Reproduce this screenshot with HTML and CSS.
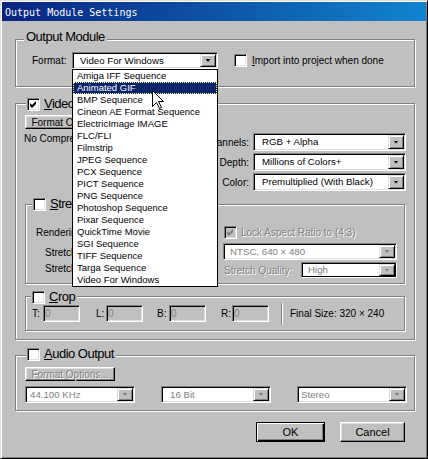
FILE: index.html
```html
<!DOCTYPE html>
<html>
<head>
<meta charset="utf-8">
<title>Output Module Settings</title>
<link rel="stylesheet" href="styles.css">
</head>
<body>
<div class="window">
  <div class="titlebar">Output Module Settings</div>

  <div class="group g-output">
    <div class="legend lg-output"><span class="legend-text">Output Module</span></div>
    <div class="om-row">
      <span class="lbl format-lbl">Format:</span>
      <div class="combo w-format"><span class="val">Video For Windows</span><span class="dd"><i class="arrow"></i></span></div>
      <span class="cb import-cb"></span>
      <span class="lbl import-lbl"><u>I</u>mport into project when done</span>
    </div>
  </div>

  <div class="group g-video">
    <div class="legend lg-video"><span class="cb checked"><svg viewBox="0 0 13 13" width="13" height="13"><polygon points="3,5 5,7 9,3 9,6 5,10 3,8" fill="#000"/></svg></span><span class="legend-text"><u>V</u>ideo Output</span></div>
    <div class="video-top">
      <div class="video-left">
        <button class="btn fmt-btn">Format Options...</button>
        <div class="nocomp">No Compression</div>
      </div>
      <div class="video-right">
        <span class="rlbl">Channels:</span>
        <div class="combo"><span class="val">RGB + Alpha</span><span class="dd"><i class="arrow"></i></span></div>
        <span class="rlbl">Depth:</span>
        <div class="combo"><span class="val">Millions of Colors+</span><span class="dd"><i class="arrow"></i></span></div>
        <span class="rlbl">Color:</span>
        <div class="combo"><span class="val">Premultiplied (With Black)</span><span class="dd"><i class="arrow"></i></span></div>
      </div>
    </div>

    <div class="group inner g-stretch">
      <div class="legend lg-stretch"><span class="cb"></span><span class="legend-text"><u>S</u>tretch</span></div>
      <div class="stretch-body">
        <div class="stretch-left">
          <div class="sl l1">Rendering at:</div>
          <div class="sl l2">Stretch to:</div>
          <div class="sl l3">Stretch %:</div>
        </div>
        <div class="stretch-right">
          <div class="lock-row">
            <span class="cb disabled"><svg viewBox="0 0 13 13" width="13" height="13"><polygon points="3,5 5,7 9,3 9,6 5,10 3,8" fill="#808080"/></svg></span>
            <span class="dis lock-lbl">Lock Aspect Ratio to (4:3)</span>
          </div>
          <div class="combo off ntsc"><span class="val">NTSC, 640 × 480</span><span class="dd"><i class="arrow"></i></span></div>
          <div class="quality-row">
            <span class="dis">Stretch Quality:</span>
            <div class="combo off quality"><span class="val">High</span><span class="dd"><i class="arrow"></i></span></div>
          </div>
        </div>
      </div>
    </div>

    <div class="group inner g-crop">
      <div class="legend lg-crop"><span class="cb"></span><span class="legend-text"><u>C</u>rop</span></div>
      <div class="crop-row">
        <span class="clbl w-t">T:</span><span class="inp">0</span>
        <span class="clbl w-l">L:</span><span class="inp">0</span>
        <span class="clbl w-b">B:</span><span class="inp">0</span>
        <span class="clbl w-r">R:</span><span class="inp">0</span>
        <span class="sep"></span>
        <span class="final">Final Size: 320 × 240</span>
      </div>
    </div>
  </div>

  <div class="group g-audio">
    <div class="legend lg-audio"><span class="cb"></span><span class="legend-text"><u>A</u>udio Output</span></div>
    <button class="btn fmt-btn audio-btn dis">Format Options...</button>
    <div class="audio-row">
      <div class="combo off a1"><span class="val">44.100 KHz</span><span class="dd"><i class="arrow"></i></span></div>
      <div class="combo off a2"><span class="val">16 Bit</span><span class="dd"><i class="arrow"></i></span></div>
      <div class="combo off a3"><span class="val">Stereo</span><span class="dd"><i class="arrow"></i></span></div>
    </div>
  </div>

  <div class="buttons">
    <button class="btn default ok">OK</button>
    <button class="btn cancel">Cancel</button>
  </div>

  <ul class="droplist">
    <li>Amiga IFF Sequence</li>
    <li class="sel">Animated GIF</li>
    <li>BMP Sequence</li>
    <li>Cineon AE Format Sequence</li>
    <li>ElectricImage IMAGE</li>
    <li>FLC/FLI</li>
    <li>Filmstrip</li>
    <li>JPEG Sequence</li>
    <li>PCX Sequence</li>
    <li>PICT Sequence</li>
    <li>PNG Sequence</li>
    <li>Photoshop Sequence</li>
    <li>Pixar Sequence</li>
    <li>QuickTime Movie</li>
    <li>SGI Sequence</li>
    <li>TIFF Sequence</li>
    <li>Targa Sequence</li>
    <li>Video For Windows</li>
  </ul>

  <svg class="cursor" width="13" height="20" viewBox="0 0 13 20"><polygon points="0.5,0.5 0.5,16.5 4.5,12.5 7.5,18.5 9.5,17.5 6.5,11.5 11.5,11.5" fill="#fff" stroke="#000" stroke-width="1" stroke-linejoin="miter"/></svg>
</div>
</body>
</html>
```

FILE: styles.css
```css
* { box-sizing: border-box; }
html, body { margin: 0; padding: 0; }
body {
  background: #c0c0c0;
  font-family: "Liberation Sans", Arial, sans-serif;
  font-size: 10px;
  color: #000;
}
u { text-decoration: underline; text-underline-offset: 1px; }

.window {
  position: relative;
  width: 428px;
  height: 459px;
  background: #c0c0c0;
  border: 1px solid;
  border-color: #dfdfdf #000 #000 #dfdfdf;
  box-shadow: inset 1px 1px 0 #fff, inset -1px -1px 0 #808080;
  padding: 1px;
}

.titlebar {
  height: 19px;
  background: linear-gradient(to right, #0a2380 0%, #1084d0 100%);
  color: #fff;
  font-family: "DejaVu Sans Mono", monospace;
  font-size: 10px;
  line-height: 16px;
  padding: 3px 0 0 3px;
  white-space: nowrap;
}

/* group boxes */
.group {
  border: 1px solid #808080;
  box-shadow: inset 1px 1px 0 #fff, 1px 1px 0 #fff;
  margin-left: 13px;
  width: 400px;
}
.g-output { margin-top: 18px; height: 48px; }
.g-video { margin-top: 16px; height: 237px; }
.g-audio { margin-top: 15px; height: 56px; }
.group.inner { margin-left: 9px; width: 380px; }
.g-stretch { margin-top: 13px; height: 80px; }
.g-crop { margin-top: 12px; height: 35px; }

.legend {
  display: flex;
  align-items: center;
  width: max-content;
  height: 14px;
  background: #c0c0c0;
  padding: 0 2px 0 1px;
}
.legend-text {
  font-size: 13px;
  letter-spacing: -0.5px;
  line-height: 14px;
  white-space: nowrap;
}
.legend .cb { margin-right: 4px; }
.lg-output { margin: -10px 0 0 8px; padding: 0 2px; }
.lg-video { margin: -7px 0 0 10px; }
.lg-stretch { margin: -8px 0 0 6px; }
.lg-crop { margin: -7px 0 0 5px; }
.lg-audio { margin: -9px 0 0 10px; }

/* checkbox */
.cb {
  display: inline-block;
  flex: none;
  width: 13px;
  height: 13px;
  background: #fff;
  border: 1px solid;
  border-color: #808080 #fff #fff #808080;
  box-shadow: inset 1px 1px 0 #000, inset -1px -1px 0 #dfdfdf;
  position: relative;
}
.cb svg { display: block; margin: -1px; }
.cb.disabled { background: #c0c0c0; }

/* combo box */
.combo {
  display: flex;
  height: 17px;
  background: #fff;
  border: 1px solid;
  border-color: #808080 #fff #fff #808080;
  box-shadow: inset 1px 1px 0 #000, inset -1px -1px 0 #dfdfdf;
  padding: 1px;
}
.combo .val {
  flex: 1;
  padding-left: 5px;
  font-size: 9.7px;
  line-height: 13px;
  white-space: nowrap;
  overflow: hidden;
}
.combo .dd {
  flex: none;
  width: 16px;
  background: #c0c0c0;
  border: 1px solid;
  border-color: #dfdfdf #000 #000 #dfdfdf;
  box-shadow: inset 1px 1px 0 #fff, inset -1px -1px 0 #808080;
  display: flex;
  align-items: center;
  justify-content: center;
}
.arrow {
  display: block;
  width: 5px;
  height: 3px;
  background: #000;
  clip-path: polygon(0 0, 100% 0, 50% 100%);
}
.combo.off .val { color: #808080; }
.combo.off .arrow { background: #808080; }

/* buttons */
.btn {
  display: block;
  background: #c0c0c0;
  border: 1px solid;
  border-color: #fff #000 #000 #fff;
  box-shadow: inset -1px -1px 0 #808080, inset 1px 1px 0 #dfdfdf;
  font-family: "Liberation Sans", Arial, sans-serif;
  font-size: 10px;
  color: #000;
  padding: 0;
  margin: 0;
  white-space: nowrap;
}
.dis {
  color: #808080;
  text-shadow: 1px 1px 0 #fff;
}

/* output module row */
.om-row {
  display: flex;
  align-items: center;
  margin-top: 8px;
  padding-left: 16px;
  height: 17px;
}
.format-lbl { width: 40px; }
.w-format { width: 146px; }
.w-format .val { padding-left: 6px; }
.import-cb { margin-left: 16px; }
.import-lbl { margin-left: 5px; white-space: nowrap; }

/* video */
.video-top {
  display: flex;
  align-items: flex-start;
  margin-top: 4px;
  margin-left: 9px;
}
.video-left { width: 164px; }
.fmt-btn { width: 90px; height: 14px; line-height: 11px; }
.nocomp { margin-top: 4px; margin-left: -1px; line-height: 12px; white-space: nowrap; }
.video-right {
  margin-top: 18px;
  display: grid;
  grid-template-columns: 60px 153px;
  grid-auto-rows: 18px;
  column-gap: 4px;
  row-gap: 2px;
}
.rlbl { text-align: right; align-self: center; }
.video-right .combo { height: 18px; }
.video-right .val { padding-left: 7px; line-height: 14px; }

/* stretch */
.stretch-body { display: flex; }
.stretch-left { width: 197px; padding-left: 10px; }
.sl { line-height: 12px; white-space: nowrap; }
.l1 { margin-top: 16px; }
.l2 { margin-top: 8px; margin-left: 9px; }
.l3 { margin-top: 4px; margin-left: 9px; }
.stretch-right { width: 174px; }
.lock-row { display: flex; align-items: center; margin-top: 15px; height: 13px; }
.lock-row .cb { margin-left: 1px; }
.lock-lbl { margin-left: 4px; white-space: nowrap; }
.ntsc { margin-top: 4px; height: 17px; }
.quality-row {
  display: flex;
  align-items: center;
  justify-content: space-between;
  margin-top: 2px;
  height: 16px;
  padding-left: 1px;
}
.quality { width: 96px; height: 16px; }
.quality .val { line-height: 12px; color: #000; }
.quality .arrow { background: #808080; }
.quality { box-shadow: inset 1px 1px 0 #000, inset -1px -1px 0 #000; }

/* crop */
.crop-row {
  display: flex;
  align-items: center;
  margin-top: 1px;
  padding-left: 6px;
  height: 17px;
}
.clbl { flex: none; }
.w-t { width: 11px; }
.w-l { width: 10px; margin-left: 16px; }
.w-b { width: 12px; margin-left: 14px; }
.w-r { width: 11px; margin-left: 15px; }
.inp {
  flex: none;
  width: 37px;
  height: 17px;
  background: #c0c0c0;
  border: 1px solid;
  border-color: #808080 #fff #fff #808080;
  box-shadow: inset 1px 1px 0 #000, inset -1px -1px 0 #dfdfdf;
  color: #808080;
  padding-left: 1px;
  line-height: 15px;
}
.sep {
  flex: none;
  width: 2px;
  height: 22px;
  border-left: 1px solid #808080;
  border-right: 1px solid #fff;
  margin-left: 12px;
}
.final { margin-left: 7px; white-space: nowrap; }

/* audio */
.audio-btn { margin-top: 6px; margin-left: 9px; }
.audio-row {
  display: flex;
  gap: 26px;
  margin-top: 5px;
  margin-left: 9px;
}
.audio-row .combo { width: 110px; }
.a1 .val { padding-left: 3px; }
.a2 .val { padding-left: 7px; }
.a3 .val { padding-left: 2px; }

/* dialog buttons */
.buttons {
  display: flex;
  justify-content: flex-end;
  gap: 15px;
  margin-top: 11px;
  padding-right: 21px;
}
.ok, .cancel { height: 20px; font-size: 11px; }
.ok { width: 69px; }
.cancel { width: 65px; }
.btn.default {
  border: 1px solid #000;
  box-shadow: inset 1px 1px 0 #fff, inset -1px -1px 0 #000, inset -2px -2px 0 #808080;
}

/* dropdown list overlay */
.droplist {
  position: absolute;
  left: 71px;
  top: 68px;
  width: 146px;
  height: 218px;
  margin: 0;
  padding: 0;
  list-style: none;
  background: #fff;
  border: 1px solid #000;
  z-index: 10;
}
.droplist li {
  height: 12px;
  line-height: 12px;
  font-size: 9.5px;
  padding-left: 4px;
  white-space: nowrap;
}
.droplist li.sel {
  background: #0a246a;
  color: #fff;
  outline: 1px dotted #ffff90;
  outline-offset: -1px;
}

.cursor {
  position: absolute;
  left: 151px;
  top: 89px;
  z-index: 20;
}
```
